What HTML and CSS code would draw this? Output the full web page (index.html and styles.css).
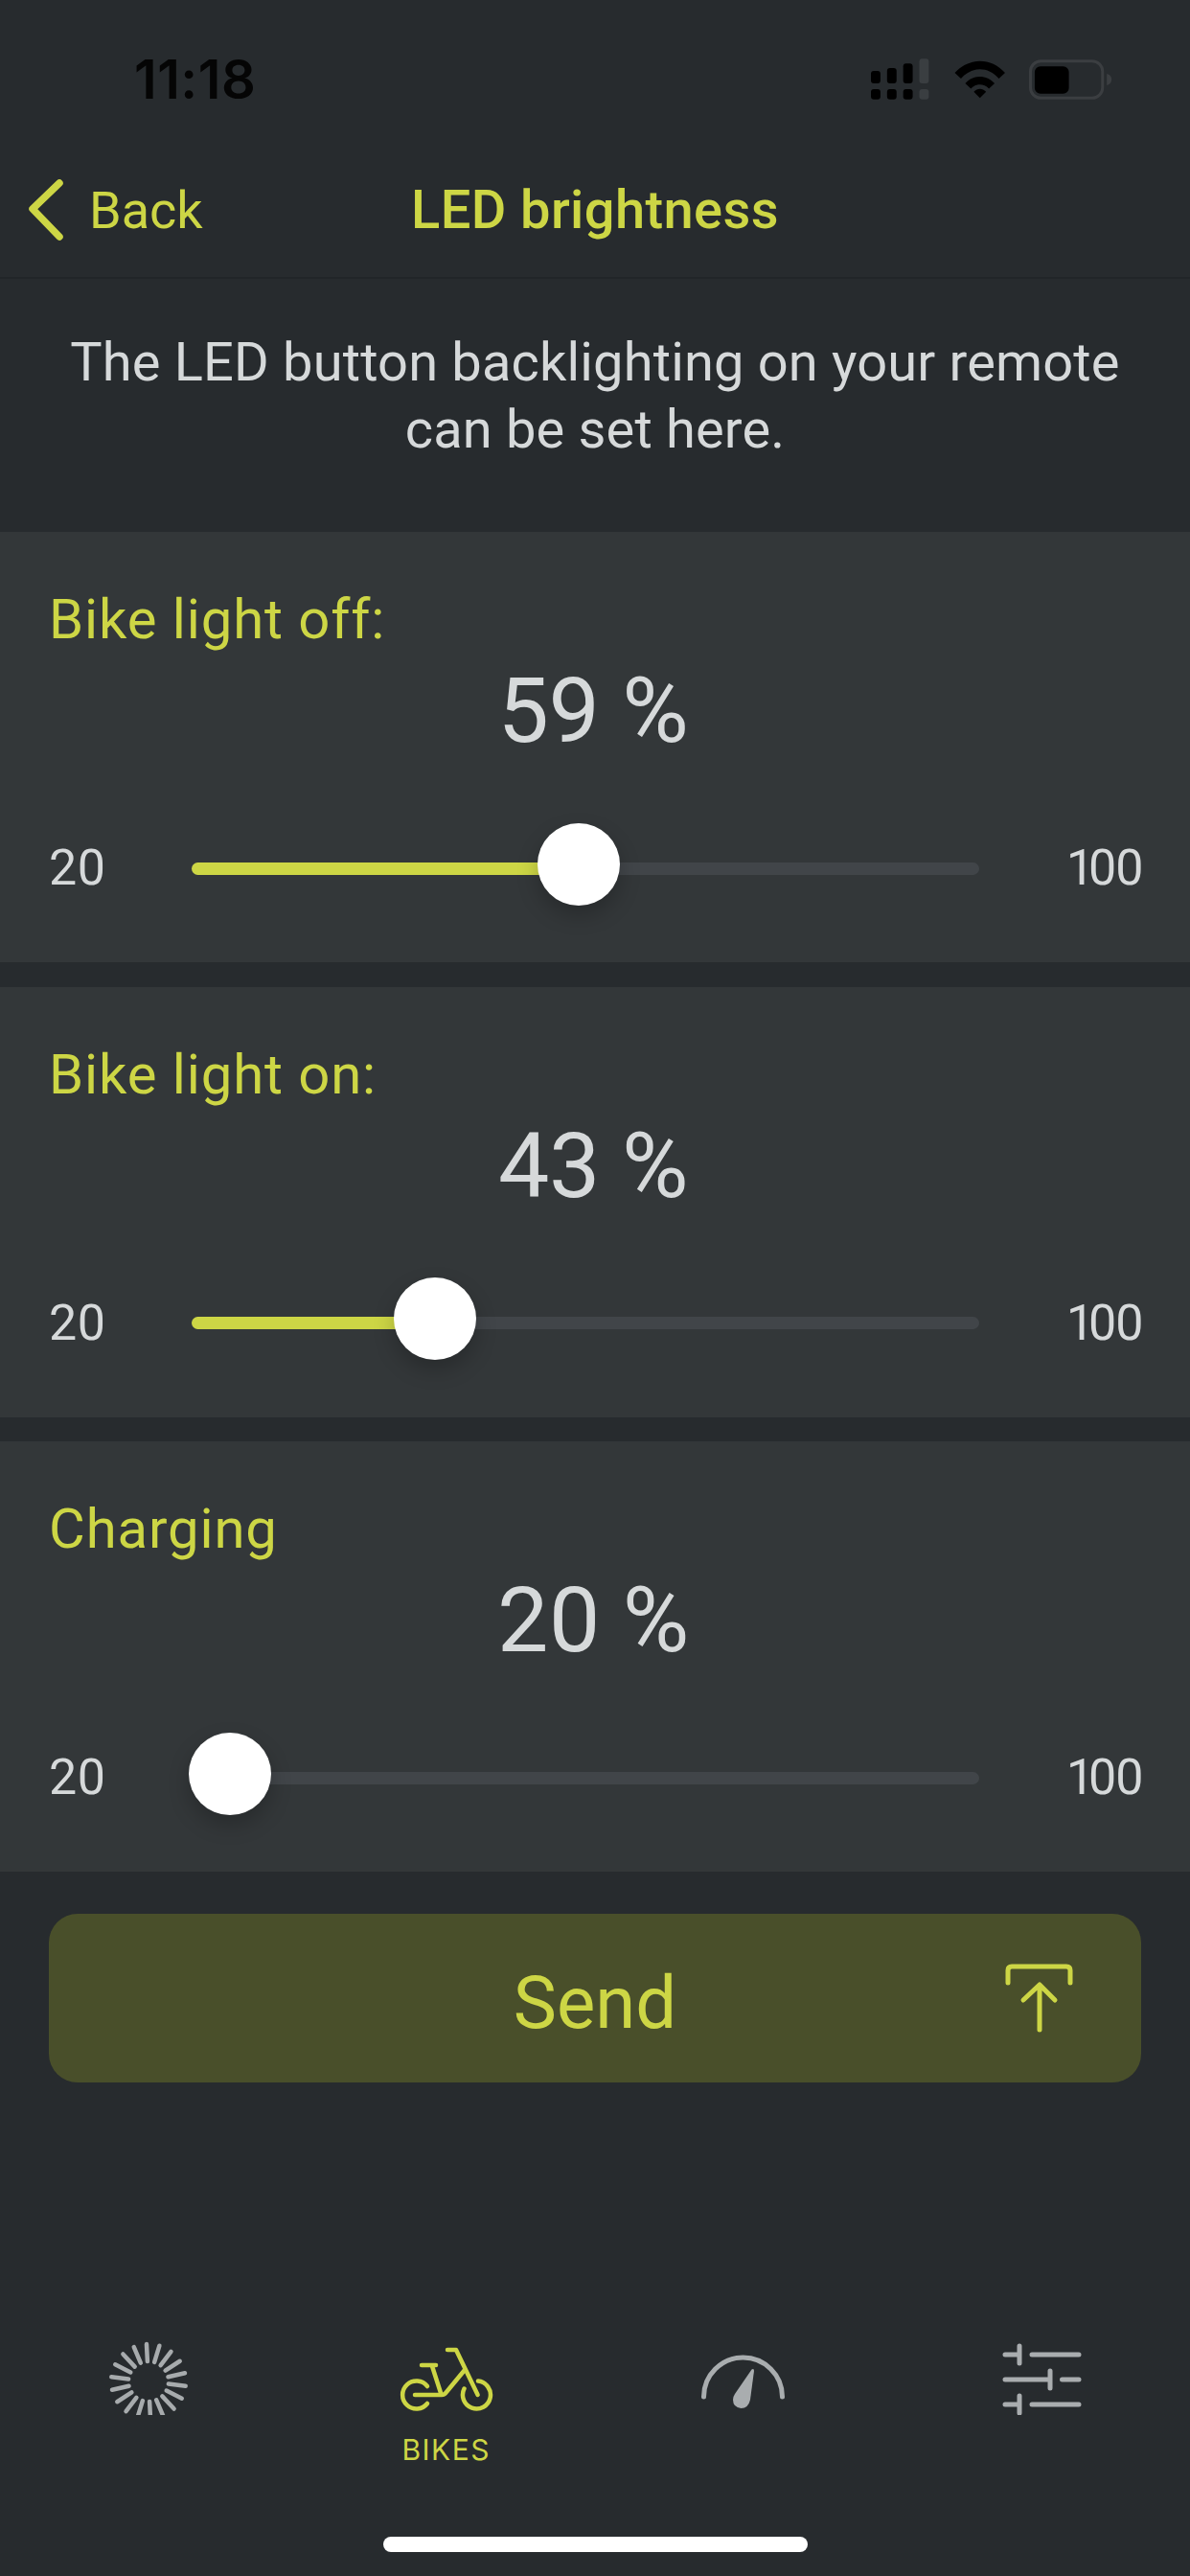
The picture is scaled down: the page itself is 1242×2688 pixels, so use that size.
FILE: index.html
```html
<!DOCTYPE html>
<html lang="en">
<head>
<meta charset="utf-8">
<title>LED brightness</title>
<link rel="stylesheet" href="styles.css">
</head>
<body>
<div class="page">
  <header class="status">
    <span class="time">11:18</span>
    <div class="status-icons">
      <svg class="ic-cell" viewBox="0 0 62 44" width="62" height="44">
        <g fill="#000">
          <rect x="0" y="13" width="10" height="13" rx="3"/><rect x="17" y="10" width="10" height="16" rx="3"/><rect x="34" y="5" width="10" height="21" rx="3"/>
          <rect x="0" y="32" width="10" height="11" rx="3"/><rect x="17" y="32" width="10" height="11" rx="3"/><rect x="34" y="32" width="10" height="11" rx="3"/>
        </g>
        <g fill="#3a3e41">
          <rect x="51" y="0" width="10" height="26" rx="3"/><rect x="51" y="32" width="10" height="11" rx="3"/>
        </g>
      </svg>
      <svg class="ic-wifi" viewBox="0 0 54 40" width="54" height="40">
        <path d="M0.5 13 C15 -3.500 39 -3.500 53.500 13 L47 19 C35.500 6 18.500 6 7 19 Z" fill="#000"/>
        <path d="M11.500 24 C20 14.500 34 14.500 42.500 24 L36.500 29.500 C31 24 23 24 17.500 29.500 Z" fill="#000"/>
        <path d="M20.500 33 C24.500 28.800 29.500 28.800 33.500 33 L27 39.500 Z" fill="#000"/>
      </svg>
      <svg class="ic-batt" viewBox="0 0 88 42" width="88" height="42">
        <rect x="1.500" y="1.500" width="76" height="39" rx="11" fill="none" stroke="#3b3e41" stroke-width="3"/>
        <rect x="6" y="7" width="36" height="29" rx="6" fill="#000"/>
        <path d="M82 15 C86 16 87 19 87 21 C87 23 86 26 82 27 Z" fill="#3b3e41"/>
      </svg>
    </div>
  </header>

  <nav class="navbar">
    <a class="back">
      <svg class="chev" viewBox="0 0 44 70" width="44" height="70"><path d="M36 7 L8 34 L36 63" fill="none" stroke="#cdd645" stroke-width="7.500" stroke-linecap="round" stroke-linejoin="round"/></svg>
      <span>Back</span>
    </a>
    <h1 class="title">LED brightness</h1>
  </nav>

  <p class="intro">The LED button backlighting on your remote<br>can be set here.</p>

  <section class="card">
    <h2 class="card-label">Bike light off:</h2>
    <div class="percent">59 %</div>
    <div class="slider-row">
      <span class="min">20</span>
      <div class="track">
        <div class="fill" style="width:404px"></div>
        <div class="thumb" style="left:404px"></div>
      </div>
      <span class="max">100</span>
    </div>
  </section>

  <section class="card">
    <h2 class="card-label">Bike light on:</h2>
    <div class="percent">43 %</div>
    <div class="slider-row">
      <span class="min">20</span>
      <div class="track">
        <div class="fill" style="width:254px"></div>
        <div class="thumb" style="left:254px"></div>
      </div>
      <span class="max">100</span>
    </div>
  </section>

  <section class="card">
    <h2 class="card-label">Charging</h2>
    <div class="percent">20 %</div>
    <div class="slider-row">
      <span class="min">20</span>
      <div class="track">
        <div class="thumb" style="left:40px"></div>
      </div>
      <span class="max">100</span>
    </div>
  </section>

  <button class="send">
    <span class="send-label">Send</span>
    <svg class="send-icon" viewBox="0 0 80 80" width="80" height="80">
      <path d="M7 24 V11 Q7 7 11 7 H68 Q72 7 72 11 V24 M40 73 V27 M23 42 L40 26 L56 42" fill="none" stroke="#cdd645" stroke-width="5" stroke-linecap="round" stroke-linejoin="round"/>
    </svg>
  </button>

  <footer class="tabbar">
    <div class="tab">
      <svg viewBox="0 0 110 80" width="110" height="80" class="tab-icon">
        <g stroke="#a7abad" stroke-width="4.500" stroke-linecap="round">
          <line x1="55" y1="24" x2="55" y2="6" transform="rotate(-3 55 45)"/>
          <line x1="55" y1="24" x2="55" y2="6" transform="rotate(17 55 45)"/>
          <line x1="55" y1="24" x2="55" y2="6" transform="rotate(37 55 45)"/>
          <line x1="55" y1="24" x2="55" y2="6" transform="rotate(57 55 45)"/>
          <line x1="55" y1="24" x2="55" y2="6" transform="rotate(77 55 45)"/>
          <line x1="55" y1="24" x2="55" y2="6" transform="rotate(97 55 45)"/>
          <line x1="55" y1="24" x2="55" y2="6" transform="rotate(117 55 45)"/>
          <line x1="55" y1="24" x2="55" y2="6" transform="rotate(137 55 45)"/>
          <line x1="55" y1="24" x2="55" y2="6" transform="rotate(157 55 45)"/>
          <line x1="55" y1="24" x2="55" y2="6" transform="rotate(177 55 45)"/>
          <line x1="55" y1="24" x2="55" y2="6" transform="rotate(197 55 45)"/>
          <line x1="55" y1="24" x2="55" y2="6" transform="rotate(217 55 45)"/>
          <line x1="55" y1="24" x2="55" y2="6" transform="rotate(237 55 45)"/>
          <line x1="55" y1="24" x2="55" y2="6" transform="rotate(257 55 45)"/>
          <line x1="55" y1="24" x2="55" y2="6" transform="rotate(277 55 45)"/>
          <line x1="55" y1="24" x2="55" y2="6" transform="rotate(297 55 45)"/>
          <line x1="55" y1="24" x2="55" y2="6" transform="rotate(317 55 45)"/>
          <line x1="55" y1="24" x2="55" y2="6" transform="rotate(337 55 45)"/>
        </g>
      </svg>
    </div>
    <div class="tab tab-active">
      <svg viewBox="0 0 110 80" width="110" height="80" class="tab-icon">
        <g fill="none" stroke="#cdd645" stroke-width="4.500" stroke-linecap="round" stroke-linejoin="round">
          <path d="M35 50 A14.500 14.500 0 1 0 35 68"/>
          <path d="M73.500 52.500 A14.500 14.500 0 1 0 88 44.600"/>
          <path d="M22 59 H50 Q53 59 55 56 L74 33"/>
          <path d="M40 29 L49 57"/>
          <path d="M29 28 H44"/>
          <path d="M56 12 H65 L87.600 59"/>
        </g>
      </svg>
      <span class="tab-label">BIKES</span>
    </div>
    <div class="tab">
      <svg viewBox="0 0 110 80" width="110" height="80" class="tab-icon">
        <path d="M13.500 61 A41 41 0 0 1 95.500 61" fill="none" stroke="#a9adaf" stroke-width="5" stroke-linecap="round"/>
        <path d="M63.500 32.500 Q66 31 66 34 L62 64 Q60 73 52.500 73 Q44 72 44 64 Q44 61 46 58 Z" fill="#a9adaf"/>
      </svg>
    </div>
    <div class="tab">
      <svg viewBox="0 0 110 80" width="110" height="80" class="tab-icon">
        <path d="M17 17 H32 M32 8 V26 M45 17 H94 M17 43 H64 M64 34 V52 M76.500 43 H94 M17 69 H32 M32 60 V78 M45 69 H94" fill="none" stroke="#a9adaf" stroke-width="5" stroke-linecap="round"/>
      </svg>
    </div>
  </footer>
  <div class="home"></div>
</div>
</body>
</html>
```
FILE: styles.css
```css
* { box-sizing: border-box; }
html, body { margin: 0; padding: 0; }
body { background: #272b2e; font-family: Roboto, "Liberation Sans", sans-serif; color: #d6d9da; }
.page { width: 1242px; height: 2688px; display: flex; flex-direction: column; overflow: hidden; }

.status { height: 150px; display: flex; justify-content: space-between; padding: 61px 81px 0 140px; }
.time { font-family: Inter, Roboto, sans-serif; font-weight: 600; font-size: 56px; line-height: 44px; letter-spacing: 0.5px; color: #050505; height: 44px; }
.status-icons { display: flex; align-items: flex-start; gap: 0; width: 253px; }
.ic-cell { margin-left: 1px; }
.ic-wifi { margin: 2px 0 0 26px; }
.ic-batt { margin: 1px 0 0 24px; }

.navbar { height: 141px; display: grid; grid-template-columns: 1fr auto 1fr; grid-template-areas: "back title ."; align-items: center; border-bottom: 2px solid #212528; padding-bottom: 1px; }
.back { grid-area: back; display: flex; align-items: center; color: #cdd645; font-size: 54px; padding-left: 26px; }
.back span { margin-left: 23px; }
.chev { flex: none; }
.title { grid-area: title; margin: 0; font-size: 56px; font-weight: 500; letter-spacing: 0.4px; color: #cdd645; }

.intro { margin: 0; padding: 52px 0 72px; text-align: center; font-size: 56px; line-height: 70px; letter-spacing: 0.16px; }

.card { background: #333739; height: 449px; margin-bottom: 25.500px; padding-top: 56px; flex: none; }
.card:nth-of-type(3) { margin-bottom: 0; }
.card-label { margin: 0; padding-left: 51px; font-weight: 400; font-size: 58px; line-height: 70px; letter-spacing: 0.9px; color: #cdd645; }
.percent { text-align: center; font-size: 95px; line-height: 110px; margin-top: 6px; padding-right: 4px; letter-spacing: -0.5px; font-variant-numeric: proportional-nums; }
.slider-row { display: grid; grid-template-columns: 148px 1fr 170px; align-items: center; height: 60px; padding: 0 50px 0 52px; margin-top: 79px; }
.min, .max { font-size: 52px; line-height: 60px; font-variant-numeric: proportional-nums; }
.min { margin-left: -1px; }
.max { text-align: right; letter-spacing: -2px; }
.track { position: relative; height: 13px; border-radius: 7px; background: #414549; }
.fill { height: 13px; border-radius: 7px 0 0 7px; background: #cdd645; }
.thumb { position: absolute; top: -41px; width: 86px; height: 86px; margin-left: -43px; border-radius: 50%; background: #fff; box-shadow: 0 10px 22px rgba(0, 0, 0, 0.22); }

.send { flex: none; width: 1140px; height: 176px; margin: 44px 0 0 51px; border: 0; border-radius: 30px; background: #494f2a; display: grid; grid-template-columns: 1fr auto 1fr; align-items: center; padding: 0 66px; font-family: inherit; }
.send-label { grid-column: 2; font-size: 76px; margin-top: 10px; color: #cdd645; }
.send-icon { grid-column: 3; justify-self: end; }

.tabbar { margin-top: auto; display: grid; grid-template-columns: repeat(4, 1fr); height: 132px; }
.tab { display: flex; flex-direction: column; align-items: center; }
.tab-icon { display: block; flex: none; }
.tab-label { font-family: Inter, Roboto, sans-serif; font-size: 30px; line-height: 36px; margin-top: 18px; letter-spacing: 1.5px; color: #cdd645; }
.home { flex: none; align-self: center; width: 443px; height: 16px; border-radius: 8px; background: #fff; margin: 75px 0 25px; }
```
